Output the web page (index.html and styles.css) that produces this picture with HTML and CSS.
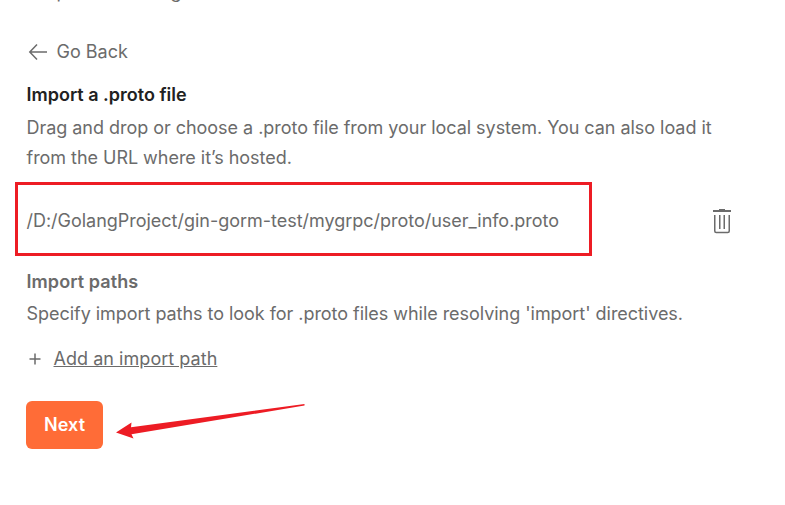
FILE: index.html
```html
<!DOCTYPE html>
<html lang="en">
<head>
<meta charset="utf-8">
<title>Import a .proto file</title>
<link rel="stylesheet" href="styles.css">
</head>
<body>
<main class="panel">
  <p class="previous"><span>p</span><span>g</span></p>
  <a class="back">
    <svg class="back-icon" width="20" height="18" viewBox="0 0 20 18"><path d="M19 9H2M9 1.500 1.800 9 9 16.500"/></svg>
    <span>Go Back</span>
  </a>
  <h1 class="title">Import a .proto file</h1>
  <p class="text text-intro">Drag and drop or choose a .proto file from your local system. You can also load it<br>from the URL where it’s hosted.</p>
  <div class="file-row">
    <div class="file">/D:/GolangProject/gin-gorm-test/mygrpc/proto/user_info.proto</div>
    <svg class="trash" width="18" height="25" viewBox="0 0 18 25"><path class="lid" d="M0 1h6V0h6v1h6v2H0Z"/><path d="M1.750 6v16q0 1.500 1.500 1.500h11.500q1.500 0 1.500-1.500V6M6.750 6v14M11.250 6v14"/></svg>
  </div>
  <h2 class="title title-muted">Import paths</h2>
  <p class="text text-paths">Specify import paths to look for .proto files while resolving 'import' directives.</p>
  <div class="add">
    <svg class="plus" width="12" height="12" viewBox="0 0 12 12"><path d="M6 .500v11M.500 6h11"/></svg>
    <a class="link">Add an import path</a>
  </div>
  <div class="actions">
    <button class="next">Next</button>
    <svg class="arrow" width="190" height="38" viewBox="0 0 190 38"><path d="M0 31.500 15.500 21.500 15 26.200 188.500 3 188.500 4.500 15.500 33.200 17.500 37.500Z"/></svg>
  </div>
</main>
</body>
</html>
```
FILE: styles.css
```css
* { box-sizing: border-box; }
body {
  margin: 0;
  height: 505px;
  overflow: hidden;
  background: #fff;
  color: #6b6b6b;
  font: 18px/30px Inter, "Liberation Sans", sans-serif;
}
.panel { padding-left: 26.5px; }
.previous { display: flex; gap: 103px; margin: -23px 0 0; padding-left: 30px; height: 30px; }
.back { display: flex; align-items: center; gap: 8.5px; margin: 30px 0 0 1.5px; height: 30px; }
.title { margin: 13px 0 0; font-size: 18px; font-weight: 600; color: #212121; line-height: 30px; }
.title-muted { margin-top: 11px; color: #6b6b6b; letter-spacing: 0.08px; }
.text { margin: 3px 0 0; white-space: nowrap; }
.text-intro { letter-spacing: -0.035px; }
.text-paths { margin-top: 2px; letter-spacing: -0.04px; }
.file-row { display: flex; align-items: center; margin: 9px 0 0 -11.5px; }
.file { width: 577px; height: 74px; padding: 0 8.5px; border: 3px solid #ed1c24; line-height: 71px; white-space: nowrap; letter-spacing: -0.02px; }
.trash { margin: 5px 0 0 121px; }
svg { fill: none; stroke: #6b6b6b; stroke-width: 1.5; flex: none; }
.lid { fill: #6b6b6b; stroke: none; }
.add { display: flex; align-items: center; gap: 12.5px; margin: 15px 0 0 2.5px; }
.link { text-decoration: underline; letter-spacing: 0.04px; }
.actions { display: flex; align-items: flex-start; margin: 27px 0 0 -0.5px; }
.next { width: 77px; height: 48px; padding: 0 0 1px; border: 0; border-radius: 6px; background: #ff6c37; color: #fff; font: 600 18px Inter, sans-serif; letter-spacing: 0.1px; }
.arrow { margin-left: 13px; fill: #ed1c24; stroke: none; }
```
